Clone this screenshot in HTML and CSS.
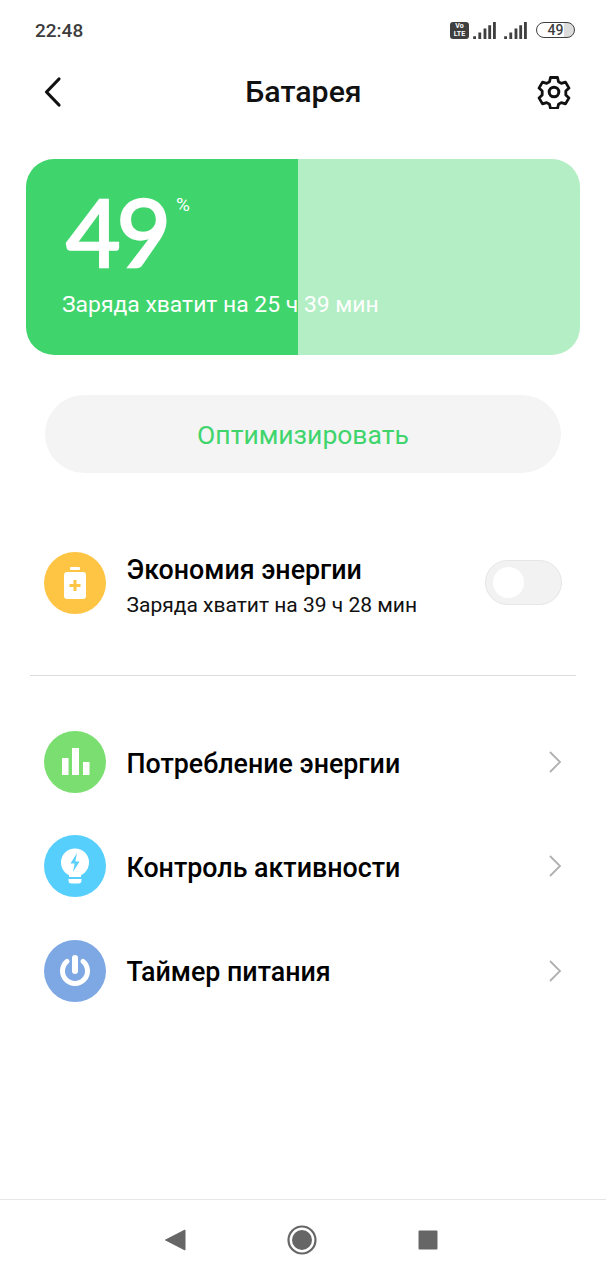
FILE: index.html
```html
<!DOCTYPE html>
<html lang="ru">
<head>
<meta charset="utf-8">
<title>Батарея</title>
<link rel="stylesheet" href="styles.css">
</head>
<body>
<div class="screen">
  <div class="status">
    <span class="time">22:48</span>
    <div class="status-icons">
      <span class="volte"><span>Vo</span><span>LTE</span></span>
      <svg class="signal" viewBox="0 0 24 18"><path d="M0 15h3v3H0zM5.500 11h3v7h-3zM11 7h3v11h-3zM16 3.500h3V18h-3zM21 0h3v18h-3z"/></svg>
      <svg class="signal sig2" viewBox="0 0 24 18"><path d="M0 15h3v3H0zM5.500 11h3v7h-3zM11 7h3v11h-3zM16 3.500h3V18h-3zM21 0h3v18h-3z"/></svg>
      <span class="batt">49</span>
    </div>
  </div>
  <header class="top">
    <svg class="back" viewBox="0 0 20 32"><path d="M16 3 3.500 16 16 29" fill="none" stroke="#111" stroke-width="3.200" stroke-linecap="round" stroke-linejoin="round"/></svg>
    <h1 class="title">Батарея</h1>
    <svg class="gear" viewBox="0 0 34 34"><path d="M13.500 2.500h7l1 4.300 2.800 1.600 4.200-1.300 3.500 6-3.200 3v3.800l3.200 3-3.500 6-4.200-1.300-2.800 1.600-1 4.300h-7l-1-4.300-2.800-1.600-4.200 1.300-3.500-6 3.200-3v-3.800l-3.200-3 3.500-6 4.200 1.300 2.800-1.600z" fill="none" stroke="#111" stroke-width="2.800" stroke-linejoin="round"/><circle cx="17" cy="17" r="4.800" fill="none" stroke="#111" stroke-width="3"/></svg>
  </header>
  <section class="card">
    <div class="level"><span class="num">49</span><span class="pct">%</span></div>
    <p class="remain">Заряда хватит на 25 ч 39 мин</p>
  </section>
  <div class="optimize">Оптимизировать</div>
  <div class="saver">
    <svg class="ico" viewBox="0 0 62 62"><circle cx="31" cy="31" r="31" fill="#fec444"/><rect x="26" y="15" width="10" height="3" rx="1" fill="#fff"/><rect x="20" y="20" width="22" height="27" rx="3" fill="#fff"/><path d="M31 28v11M25.500 33.500h11" stroke="#fec444" stroke-width="3"/></svg>
    <div class="saver-text">
      <div class="row-title">Экономия энергии</div>
      <div class="row-sub">Заряда хватит на 39 ч 28 мин</div>
    </div>
    <div class="toggle"><span class="knob"></span></div>
  </div>
  <hr class="divider">
  <ul class="list">
    <li class="row">
      <svg class="ico" viewBox="0 0 62 62"><circle cx="31" cy="31" r="31" fill="#7ade70"/><rect x="18" y="27" width="6.500" height="17" fill="#fff"/><rect x="28" y="17" width="7" height="27" fill="#fff"/><rect x="39" y="31" width="6.500" height="13" fill="#fff"/></svg>
      <span class="row-title grow">Потребление энергии</span>
      <svg class="chev" viewBox="0 0 14 24"><path d="M2 2l10 10L2 22" fill="none" stroke="#b0b0b0" stroke-width="1.800"/></svg>
    </li>
    <li class="row">
      <svg class="ico" viewBox="0 0 62 62"><circle cx="31" cy="31" r="31" fill="#57cffd"/><circle cx="31" cy="27.500" r="14" fill="#fff"/><path d="M25 38h12v4H25z" fill="#fff"/><path d="M24.500 44h13v1.500a3 3 0 0 1-3 3h-7a3 3 0 0 1-3-3z" fill="#fff"/><path d="M33 18l-6.500 10.500h4.200L29 37l6.500-10.500h-4.200z" fill="#57cffd"/></svg>
      <span class="row-title grow">Контроль активности</span>
      <svg class="chev" viewBox="0 0 14 24"><path d="M2 2l10 10L2 22" fill="none" stroke="#b0b0b0" stroke-width="1.800"/></svg>
    </li>
    <li class="row">
      <svg class="ico" viewBox="0 0 62 62"><circle cx="31" cy="31" r="31" fill="#7ea8e4"/><path d="M23 21.400a12.500 12.500 0 1 0 16 0" fill="none" stroke="#fff" stroke-width="5" stroke-linecap="round"/><path d="M31 18v13" stroke="#fff" stroke-width="6" stroke-linecap="round"/></svg>
      <span class="row-title grow">Таймер питания</span>
      <svg class="chev" viewBox="0 0 14 24"><path d="M2 2l10 10L2 22" fill="none" stroke="#b0b0b0" stroke-width="1.800"/></svg>
    </li>
  </ul>
  <nav class="nav">
    <svg class="nav-ico" viewBox="0 0 30 30"><path d="M25 5v20L5.500 15z" fill="#666" stroke="#666" stroke-width="1" stroke-linejoin="round"/></svg>
    <svg class="nav-ico" viewBox="0 0 30 30"><circle cx="15" cy="15" r="13.500" fill="none" stroke="#666" stroke-width="2.200"/><circle cx="15" cy="15" r="10" fill="#666"/></svg>
    <svg class="nav-ico" viewBox="0 0 30 30"><rect x="5.500" y="5.500" width="19" height="19" rx="1" fill="#666"/></svg>
  </nav>
</div>
</body>
</html>
```

FILE: styles.css
```css
* { box-sizing: border-box; }
html, body { margin: 0; padding: 0; background: #fff; }
body { font-family: Roboto, "Noto Sans", sans-serif; color: #000; }
.screen { width: 606px; height: 1280px; display: flex; flex-direction: column; overflow: hidden; }

.status { height: 60px; padding: 0 31px 0 35px; display: flex; align-items: center; justify-content: space-between; }
.time { font-size: 19px; font-weight: 500; color: #3c3c3c; }
.status-icons { display: flex; align-items: center; }
.volte { width: 19px; height: 17px; border-radius: 3px; background: #3f3f3f; color: #fff; font-size: 7px; font-weight: 700; line-height: 8px; display: flex; flex-direction: column; align-items: center; justify-content: center; margin-right: 4px; }
.signal { width: 23px; height: 17px; fill: #3f3f3f; }
.sig2 { margin-left: 8px; }
.batt { width: 39px; height: 16px; border: 1.500px solid #3f3f3f; border-radius: 8px; margin-left: 9px; font-size: 14px; font-weight: 500; line-height: 14px; text-align: center; color: #3f3f3f; background: linear-gradient(90deg, #fff 72%, #dcdcdc 72%); }

.top { height: 64px; padding: 0 35px 0 43px; display: flex; align-items: center; justify-content: space-between; }
.back { width: 20px; height: 32px; }
.title { margin: 0 0 0 7px; font-size: 30.300px; font-weight: 500; line-height: 40px; color: #111; }
.gear { width: 34px; height: 34px; }

.card { height: 196px; margin: 35px 26px 0; padding: 27px 0 0 36px; border-radius: 28px; background: linear-gradient(90deg, #40d46c 49.100%, #b3eec4 49.100%); color: #fff; }
.level { display: flex; align-items: flex-start; height: 96px; }
.num { font-family: Lato, Roboto, sans-serif; font-size: 94px; font-weight: 400; line-height: 90px; letter-spacing: -4px; margin-left: 4px; -webkit-text-stroke: 2.500px #fff; }
.pct { font-size: 19px; line-height: 22px; margin: 8px 0 0 9px; }
.remain { margin: 8px 0 0; font-size: 22.900px; line-height: 30px; }

.optimize { height: 78px; margin: 40px 45px 0; border-radius: 39px; background: #f4f4f4; color: #40d46c; font-size: 26.500px; line-height: 80px; text-align: center; }

.saver { margin: 79px 44px 0; height: 62px; display: flex; align-items: center; }
.ico { width: 62px; height: 62px; flex: none; margin-right: 20.500px; }
.saver-text { flex: 1; padding-top: 5px; }
.row-title { font-size: 26.800px; font-weight: 500; line-height: 34px; color: #000; padding-top: 3px; }
.saver-text .row-title { padding-top: 0; }
.row-sub { font-size: 21px; line-height: 26px; margin-top: 5px; color: #111; }
.toggle { width: 77px; height: 45px; margin-top: -2px; border: 1px solid #e6e6e6; border-radius: 23px; background: #f2f2f2; padding: 6px 0 0 7px; }
.knob { display: block; width: 31px; height: 31px; border-radius: 50%; background: #fff; }

.divider { margin: 61px 30px 0; height: 1px; border: 0; background: #dcdcdc; }

.list { list-style: none; margin: 55px 0 0; padding: 0 44px; display: flex; flex-direction: column; gap: 42.400px; }
.row { height: 62px; display: flex; align-items: center; }
.grow { flex: 1; }
.chev { width: 14px; height: 24px; }

.nav { margin-top: auto; height: 81px; border-top: 1px solid #e6e6e6; padding: 0 163px 0 160px; display: flex; align-items: center; justify-content: space-between; }
.nav-ico { width: 30px; height: 30px; }
```
